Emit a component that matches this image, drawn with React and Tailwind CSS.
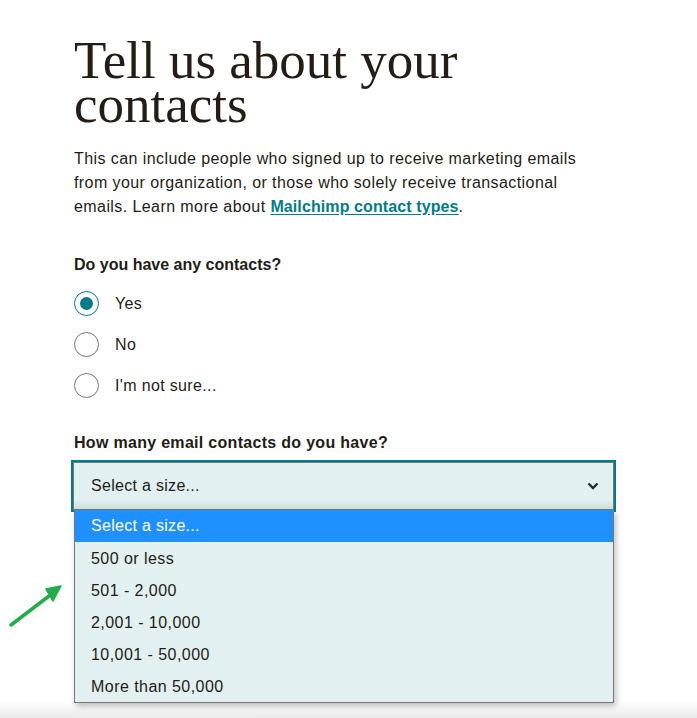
import React from 'react';

const options = ['500 or less', '501 - 2,000', '2,001 - 10,000', '10,001 - 50,000', 'More than 50,000'];

const Radio = ({ label, checked }) => (
  <label className="flex items-center h-[41px]">
    <span
      className={`w-[25px] h-[25px] rounded-full border-[1.5px] flex items-center justify-center bg-white ${
        checked ? 'border-[#007c89]' : 'border-[#777]'
      }`}
    >
      {checked && <span className="w-[13px] h-[13px] rounded-full bg-[#007c89]" />}
    </span>
    <span className="ml-[16px] text-[16px] tracking-[0.35px] text-[#241c15]">{label}</span>
  </label>
);

export default function App() {
  return (
    <div
      className="min-h-[718px] flex flex-col bg-white relative"
      style={{ fontFamily: '"Liberation Sans", Arial, sans-serif' }}
    >
      <div className="ml-[74px] w-[540px] pt-[38px]">
        <h1
          className="text-[53px] leading-[44px] text-[#241c15]"
          style={{ fontFamily: '"Liberation Serif", "Times New Roman", serif' }}
        >
          Tell us about your contacts
        </h1>

        <p className="mt-[21px] w-[530px] text-[16px] leading-[24px] tracking-[0.42px] text-[#241c15]">
          This can include people who signed up to receive marketing emails from your organization, or those who
          solely receive transactional emails. Learn more about{' '}
          <a href="#" className="text-[#007c89] font-bold tracking-[0.1px] underline underline-offset-2">
            Mailchimp contact types
          </a>
          .
        </p>

        <div className="mt-[34px] text-[16px] leading-[24px] font-bold text-[#241c15]">Do you have any contacts?</div>

        <div className="mt-[6px] flex flex-col">
          <Radio label="Yes" checked />
          <Radio label="No" />
          <Radio label="I'm not sure..." />
        </div>

        <div className="mt-[25px] text-[16px] leading-[24px] font-bold tracking-[0.3px] text-[#241c15]">
          How many email contacts do you have?
        </div>

        <div className="relative mt-[7px]">
          <div className="-ml-[1px] w-[541px] ring-2 ring-[#007c89] border border-[#7a7a7a] bg-[#e2f0f1] h-[48px] flex items-center justify-between pl-[17px] pr-[14px] shadow-[inset_0_-10px_10px_-8px_rgba(0,0,0,0.12)]">
            <span className="text-[16px] tracking-[0.3px] text-[#241c15]">Select a size...</span>
            <svg width="12" height="8" viewBox="0 0 12 8" fill="none">
              <path d="M1.5 1.5L6 6L10.5 1.5" stroke="#2b2b2b" strokeWidth="2.4" />
            </svg>
          </div>

          <ul className="absolute left-0 w-[540px] top-[48px] bg-[#e2f0f1] border-x border-b border-[#777] shadow-[2px_3px_6px_rgba(0,0,0,0.25)] z-10">
            <li className="h-[32px] flex items-center pl-[16px] bg-[#1e90ff] text-white text-[16px] tracking-[0.3px]">
              Select a size...
            </li>
            {options.map((o) => (
              <li key={o} className="h-[32px] flex items-center pl-[16px] pt-[1px] text-[16px] tracking-[0.45px] text-[#241c15]">
                {o}
              </li>
            ))}
          </ul>
        </div>
      </div>

      <div className="flex-1" />
      <div className="h-[18px] bg-gradient-to-b from-white to-[#ebebeb]" />

      <svg className="absolute left-0 top-[580px] z-20" width="70" height="50" viewBox="0 580 70 50">
        <line x1="11" y1="625" x2="53" y2="593" stroke="#22ac4c" strokeWidth="3.5" strokeLinecap="round" />
        <polygon points="61,586 46,589 53,601" fill="#22ac4c" stroke="#22ac4c" strokeWidth="1.5" strokeLinejoin="round" />
      </svg>
    </div>
  );
}
